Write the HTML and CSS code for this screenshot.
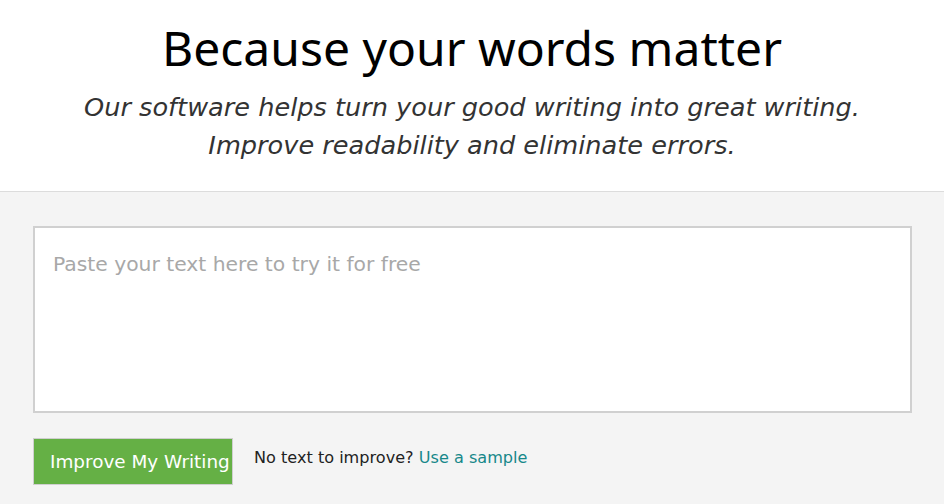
FILE: index.html
```html
<!DOCTYPE html>
<html lang="en">
<head>
    <meta charset="UTF-8">
    <meta name="viewport" content="width=device-width, initial-scale=1.0">
    <title>Because your words matter</title>
    <link rel="stylesheet" href="styles.css">
</head>
<body>

<div class="hero">
    <h1>Because your words matter</h1>
    <p class="tagline">Our software helps turn your good writing into great writing.<br>Improve readability and eliminate errors.</p>
</div>

<div class="editor-section">
    <textarea class="editor" placeholder="Paste your text here to try it for free"></textarea>

    <div class="actions">
        <button class="improve-button">Improve My Writing</button>
        <span class="sample-text">No text to improve? <a href="#">Use a sample</a></span>
    </div>
</div>

</body>
</html>
```

FILE: styles.css
```css
body {
    margin: 0;
    background-color: #f4f4f4;
    font-family: "DejaVu Sans", Verdana, sans-serif;
}

.hero {
    background-color: white;
    border-bottom: 1px solid #dcdcdc;
    text-align: center;
    padding: 20px 0 27px;
}

.hero h1 {
    margin: 0;
    font-family: "Noto Sans", "Open Sans", sans-serif;
    font-weight: normal;
    font-size: 48px;
    line-height: 56px;
    color: black;
}

.tagline {
    margin: 12px 0 0;
    font-style: italic;
    font-size: 25.6px;
    line-height: 38px;
    color: #333;
}

.editor-section {
    padding: 34px 32px 20px 33px;
}

.editor {
    display: block;
    box-sizing: border-box;
    width: 100%;
    height: 187px;
    padding: 24px 18px;
    border: 2px solid #d0d0d0;
    background-color: white;
    resize: none;
    font-family: "DejaVu Sans", Verdana, sans-serif;
    font-size: 20.3px;
    color: #333;
}

.editor::placeholder {
    color: #a8a8a8;
}

.actions {
    display: flex;
    align-items: flex-start;
    margin-top: 25px;
}

.improve-button {
    box-sizing: border-box;
    width: 200px;
    height: 47px;
    padding: 0 0 0 16px;
    text-align: left;
    white-space: nowrap;
    overflow: hidden;
    background-color: #65b045;
    color: white;
    border: 1px solid #cfcfcf;
    font-family: "DejaVu Sans", Verdana, sans-serif;
    font-size: 18.4px;
    cursor: pointer;
}

.sample-text {
    margin: 10px 0 0 21px;
    font-size: 16.1px;
    color: #222;
}

.sample-text a {
    color: #17888a;
    text-decoration: none;
}
```
